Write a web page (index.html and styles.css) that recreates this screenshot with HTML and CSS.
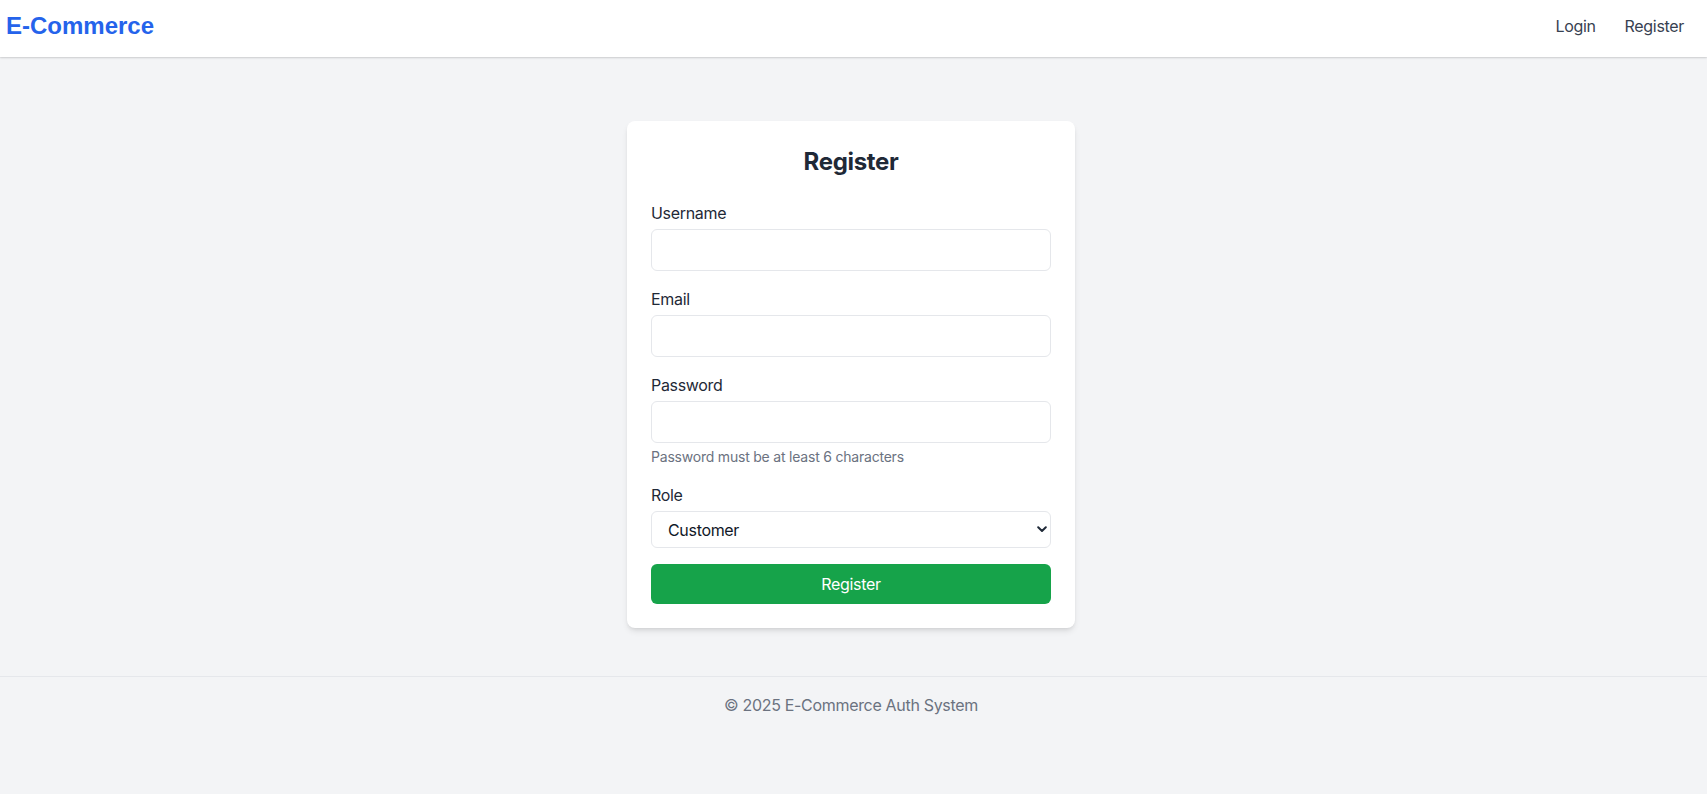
FILE: index.html
```html
<!DOCTYPE html>
<html lang="en">
<head>
<meta charset="utf-8">
<title>E-Commerce - Register</title>
<link rel="stylesheet" href="styles.css">
</head>
<body>
<header class="site-header">
  <a class="logo" href="#">E-Commerce</a>
  <nav class="nav">
    <a class="nav-link" href="#">Login</a>
    <a class="nav-link" href="#">Register</a>
  </nav>
</header>
<main class="main">
  <div class="card">
    <h1 class="card-title">Register</h1>
    <form class="form">
      <div class="field">
        <label class="label" for="username">Username</label>
        <input class="input" id="username" type="text">
      </div>
      <div class="field">
        <label class="label" for="email">Email</label>
        <input class="input" id="email" type="email">
      </div>
      <div class="field">
        <label class="label" for="password">Password</label>
        <input class="input" id="password" type="password">
        <p class="hint">Password must be at least 6 characters</p>
      </div>
      <div class="field">
        <label class="label" for="role">Role</label>
        <div class="select-wrap">
          <select class="select" id="role">
            <option>Customer</option>
            <option>Seller</option>
          </select>
          <svg class="chevron" width="10" height="7" viewBox="0 0 10 7" aria-hidden="true"><path d="M1.2 1.3 L5 5 L8.8 1.3" fill="none" stroke="#1f2937" stroke-width="2" stroke-linecap="round" stroke-linejoin="round"/></svg>
        </div>
      </div>
      <button class="btn" type="button">Register</button>
    </form>
  </div>
</main>
<footer class="footer">
  <p class="footer-text">© 2025 E-Commerce Auth System</p>
</footer>
</body>
</html>
```
FILE: styles.css
```css
* { box-sizing: border-box; }

html, body {
  margin: 0;
  padding: 0;
}

body {
  background: #f3f4f6;
  font-family: Inter, "Noto Sans", "Liberation Sans", sans-serif;
  color: #374151;
  font-size: 16px;
  line-height: 24px;
  letter-spacing: -0.02em;
  min-height: 794px;
}

.site-header {
  height: 57px;
  padding: 0 11px 5px 6px;
  background: #ffffff;
  box-shadow: 0 1px 2px rgba(0, 0, 0, 0.12), 0 1px 1px rgba(0, 0, 0, 0.04);
  display: flex;
  align-items: center;
  justify-content: space-between;
  position: relative;
  z-index: 1;
}

.logo {
  font-family: "Liberation Sans", Arial, sans-serif;
  font-weight: 700;
  font-size: 24px;
  line-height: 32px;
  letter-spacing: 0;
  color: #2563eb;
  text-decoration: none;
}

.nav {
  display: flex;
  gap: 5px;
}

.nav-link {
  padding: 0 12px;
  color: #374151;
  text-decoration: none;
  font-size: 16px;
  line-height: 24px;
}

.main {
  padding: 64px 5px 48px 0;
  display: flex;
  justify-content: center;
}

.card {
  width: 448px;
  background: #ffffff;
  border-radius: 8px;
  padding: 24px;
  box-shadow: 0 4px 6px -1px rgba(0, 0, 0, 0.1), 0 2px 4px -2px rgba(0, 0, 0, 0.1);
}

.card-title {
  margin: 0 0 24px;
  padding-top: 1px;
  height: 32px;
  text-align: center;
  font-size: 24px;
  line-height: 32px;
  font-weight: 700;
  color: #1f2937;
}

.form {
  margin: 0;
}

.field {
  margin-bottom: 16px;
}

.label {
  display: block;
  margin-bottom: 4px;
  color: #1f2937;
  font-size: 16px;
  line-height: 24px;
}

.input {
  display: block;
  width: 100%;
  height: 42px;
  padding: 8px 12px;
  border: 1px solid #e5e7eb;
  border-radius: 6px;
  background: #ffffff;
  font: inherit;
  color: #1f2937;
  outline: none;
}

.hint {
  margin: 4px 0 0;
  font-size: 14px;
  line-height: 20px;
  letter-spacing: -0.015em;
  color: #6b7280;
}

.select-wrap {
  position: relative;
}

.select {
  display: block;
  width: 100%;
  height: 37px;
  padding: 0 24px 0 16px;
  border: 1px solid #e5e7eb;
  border-radius: 6px;
  background: #ffffff;
  font: inherit;
  letter-spacing: -0.02em;
  color: #111827;
  -webkit-appearance: none;
  appearance: none;
  outline: none;
}

.chevron {
  position: absolute;
  right: 4px;
  top: 15px;
  pointer-events: none;
}

.btn {
  display: block;
  width: 100%;
  height: 40px;
  border: none;
  border-radius: 6px;
  background: #16a34a;
  color: #ffffff;
  font: inherit;
  font-size: 16px;
  line-height: 24px;
  letter-spacing: -0.02em;
  cursor: pointer;
}

.footer {
  border-top: 1px solid #e5e7eb;
  padding: 16px 5px 16px 0;
  text-align: center;
}

.footer-text {
  margin: 0;
  color: #6b7280;
  font-size: 16px;
  line-height: 24px;
}
```
